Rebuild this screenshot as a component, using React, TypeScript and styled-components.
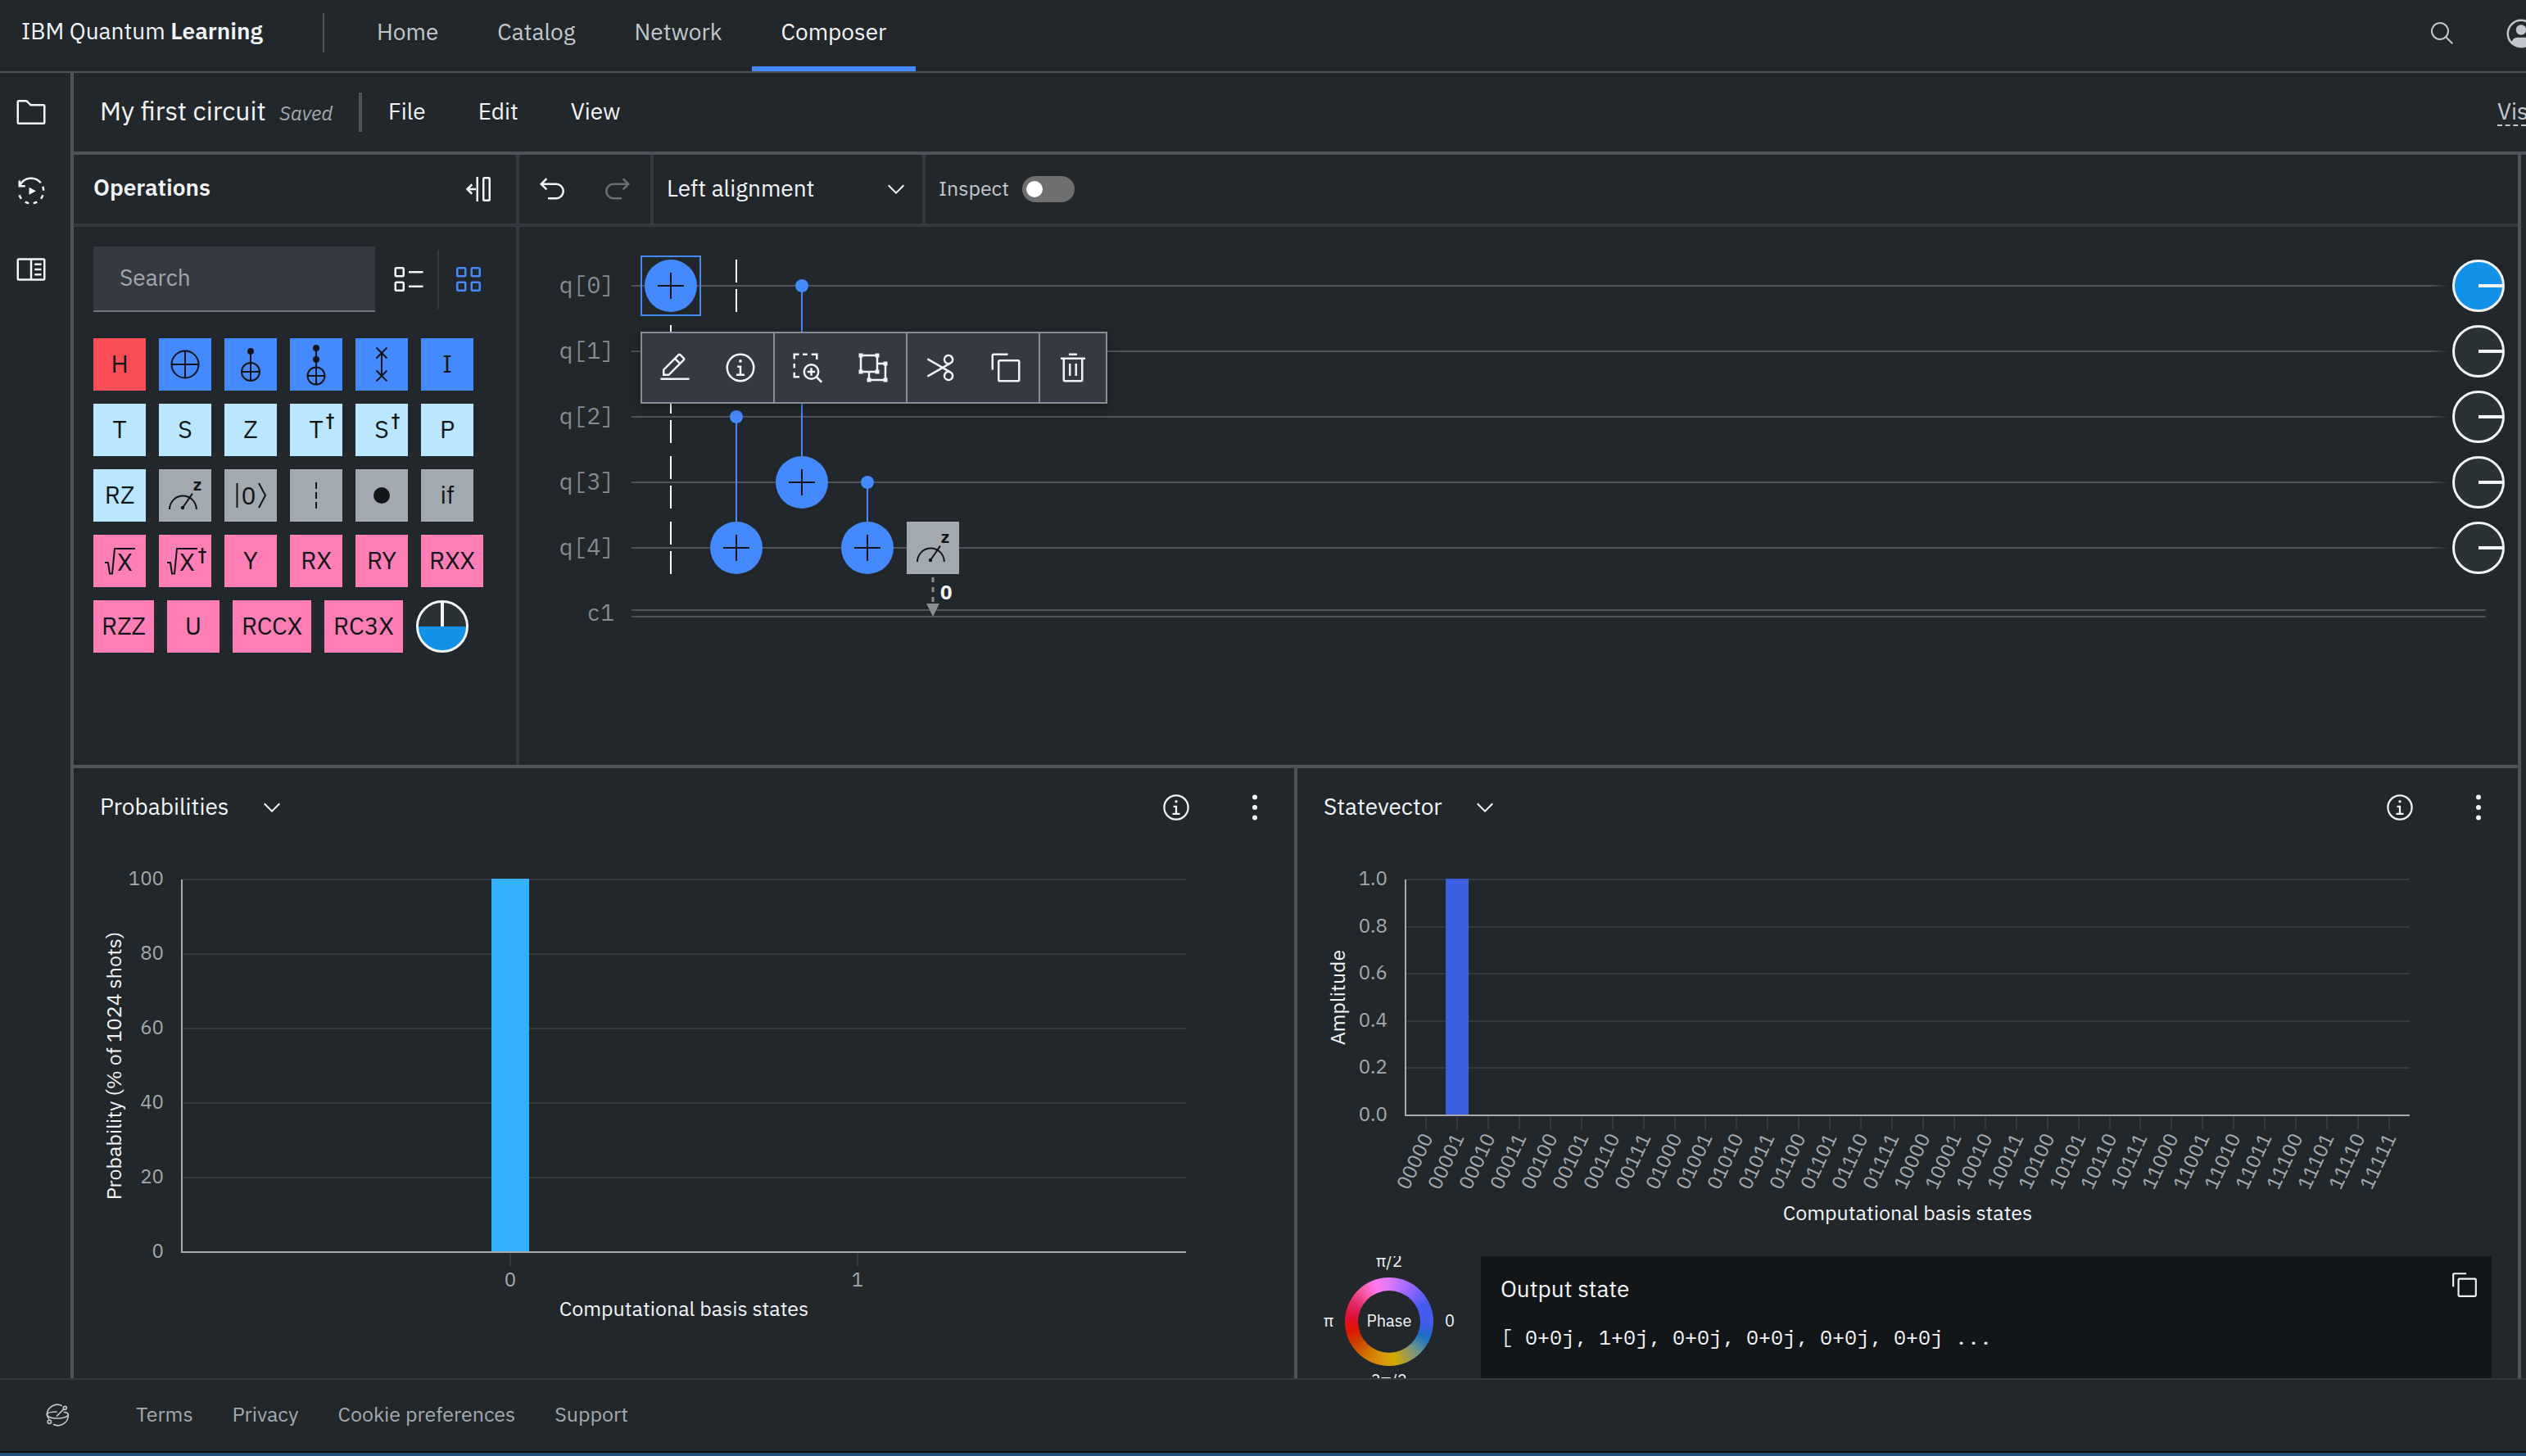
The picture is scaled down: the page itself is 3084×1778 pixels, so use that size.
import React, { useLayoutEffect, useRef, useState } from 'react';
import styled, { createGlobalStyle, css } from 'styled-components';

const c = {
  bg: '#21272a',
  line: '#4d5358',
  lineSoft: '#343a3f',
  field: '#353941',
  text: '#f2f4f8',
  text2: '#c1c7cd',
  text3: '#a2a9b0',
  muted: '#868c94',
  ink: '#121619',
  blue: '#4589ff',
  azure: '#1192e8',
};

const sans = `'IBM Plex Sans', Roboto, 'Liberation Sans', sans-serif`;
const mono = `'IBM Plex Mono', 'Liberation Mono', monospace`;

const GlobalStyle = createGlobalStyle`
  *, *::before, *::after { box-sizing: border-box; }
  body {
    margin: 0;
    background: ${c.bg};
    color: ${c.text};
    font-family: ${sans};
    font-size: 28px;
    overflow: hidden;
  }
  button, input, select { font: inherit; color: inherit; }
  svg { display: block; flex: none; }
`;

/* ---------- Icons ---------- */

type IconProps = { size?: number; children: React.ReactNode };
const Icon = ({ size = 40, children }: IconProps) => (
  <svg width={size} height={size} viewBox="0 0 32 32" fill="currentColor" aria-hidden="true">
    {children}
  </svg>
);
const line = { fill: 'none', stroke: 'currentColor', strokeWidth: 2 } as const;

const FolderIcon = () => (
  <Icon>
    <path d="M11.17,6l3.42,3.41.58.59H28V26H4V6h7.17m0-2H4A2,2,0,0,0,2,6V26a2,2,0,0,0,2,2H28a2,2,0,0,0,2-2V10a2,2,0,0,0-2-2H16L12.59,4.59A2,2,0,0,0,11.17,4Z" />
  </Icon>
);
const JobsIcon = () => (
  <Icon>
    <g {...line}>
      <path d="M5 10.8A12.2 12.2 0 0 1 25.5 8.2" />
      <path d="M4.6 6v5.4h5.6" />
      <path d="M27.4 11.8a12.2 12.2 0 0 1 .7 4M27.5 20.2a12 12 0 0 1-1.9 3.6M21.8 26.9a12.2 12.2 0 0 1-3.6 1.2M13.8 28.1a12 12 0 0 1-3.6-1.2M6.4 23.8a12 12 0 0 1-1.9-3.6" />
    </g>
    <path d="M14 12.6v7.2l6.8-3.6z" />
  </Icon>
);
const ReferenceIcon = () => (
  <Icon>
    <g {...line}>
      <rect x="3" y="6" width="26" height="20" rx="1" />
      <path d="M16 6v20M19.4 11H26M19.4 16H26M19.4 21H26" />
    </g>
  </Icon>
);
const SearchIcon = () => (
  <Icon size={32}>
    <path d="M29,27.586l-7.552-7.552a11.018,11.018,0,1,0-1.414,1.414L27.586,29ZM4,13a9,9,0,1,1,9,9A9.01,9.01,0,0,1,4,13Z" />
  </Icon>
);
const UserIcon = () => (
  <Icon>
    <circle cx="16" cy="16" r="13" {...line} />
    <circle cx="16" cy="12.4" r="5" />
    <path d="M6.8 24.6a5.6 5.6 0 0 1 5.4-4.8h7.6a5.6 5.6 0 0 1 5.4 4.8A13 13 0 0 1 6.8 24.6Z" />
  </Icon>
);
const CollapseIcon = () => (
  <Icon>
    <g {...line}>
      <path d="M15 4v24M13.6 16H5M9.800 11.400L5.200 16l4.600 4.600" />
      <rect x="21" y="5" width="6" height="22" rx="1" />
    </g>
  </Icon>
);
const UndoIcon = () => (
  <Icon>
    <path d="M20,10H7.815l3.587-3.586L10,5,4,11,10,17l1.402-1.415L7.818,12H20a6,6,0,0,1,0,12H12v2h8a8,8,0,0,0,0-16Z" />
  </Icon>
);
const RedoIcon = () => (
  <Icon>
    <path d="M12,10H24.185L20.598,6.414,22,5,28,11,22,17l-1.402-1.415L24.182,12H12a6,6,0,0,0,0,12h8v2H12a8,8,0,0,1,0-16Z" />
  </Icon>
);
const ChevronIcon = () => (
  <Icon size={32}>
    <path d="M16 22L6 12 7.4 10.6 16 19.2 24.6 10.6 26 12z" />
  </Icon>
);
const ListIcon = () => (
  <Icon>
    <g {...line}>
      <rect x="3" y="5" width="8" height="8" rx="1" />
      <rect x="3" y="19" width="8" height="8" rx="1" />
      <path d="M16 9h14M16 23h14" />
    </g>
  </Icon>
);
const GridIcon = () => (
  <Icon>
    <g {...line}>
      <rect x="5" y="5" width="8" height="8" rx="1" />
      <rect x="19" y="5" width="8" height="8" rx="1" />
      <rect x="5" y="19" width="8" height="8" rx="1" />
      <rect x="19" y="19" width="8" height="8" rx="1" />
    </g>
  </Icon>
);
const EditIcon = () => (
  <Icon>
    <path d="M2 26H30V28H2zM25.4 9c.8-.8.8-2 0-2.8l-3.6-3.6c-.8-.8-2-.8-2.8 0l-15 15V24h6.4L25.4 9zM20.4 4L24 7.6l-3 3L17.4 7 20.4 4zM6 22v-3.6l10-10 3.6 3.6-10 10H6z" />
  </Icon>
);
const InfoIcon = ({ size }: { size?: number }) => (
  <Icon size={size}>
    <path d="M17 22V14H13V16H15V22H12V24H20V22ZM16 8a1.5 1.5 0 1 0 1.5 1.5A1.5 1.5 0 0 0 16 8Z" />
    <path d="M16,30A14,14,0,1,1,30,16,14,14,0,0,1,16,30ZM16,4A12,12,0,1,0,28,16,12,12,0,0,0,16,4Z" />
  </Icon>
);
const ZoomAreaIcon = () => (
  <Icon>
    <g {...line}>
      <path d="M3 7.6V3h4.6M11.2 3h4.6M19.8 3H25v5M3 12v4.4M3 20.6V25h5" />
      <circle cx="19.6" cy="20" r="7" />
      <path d="M24.6 25l5.2 5.2M19.6 16.2v7.6M15.8 20h7.6" />
    </g>
  </Icon>
);
const UngroupIcon = () => (
  <Icon>
    <path {...line} d="M4 4h16v16H4zM20 12h8v16H12v-8" />
    {[[4, 4], [20, 4], [4, 20], [20, 20], [28, 12], [12, 28], [28, 28]].map(([x, y]) => (
      <rect key={`${x}-${y}`} x={x - 2} y={y - 2} width="4" height="4" />
    ))}
  </Icon>
);
const CutIcon = () => (
  <Icon>
    <path d="M26.5,19.63,20.24,16l6.26-3.63a5,5,0,0,0-1.21-9.2A5.19,5.19,0,0,0,24,3a5,5,0,0,0-4.33,7.53,5,5,0,0,0,2.39,2.1l-3.82,2.21L4,6.6,3,8.34,16.24,16,3,23.68l1,1.74,14.24-8.26,3.82,2.21a5,5,0,0,0-2.39,2.1A5,5,0,0,0,24,29a5.19,5.19,0,0,0,1.29-.17,5,5,0,0,0,1.21-9.2ZM21.4,9.53a3,3,0,0,1,1.1-4.12,3,3,0,0,1,4.1,1.11,3,3,0,0,1-1.1,4.11h0A3,3,0,0,1,21.4,9.53Zm5.2,16a3,3,0,0,1-4.1,1.11,3,3,0,0,1-1.1-4.12,3,3,0,0,1,4.1-1.1h0A3,3,0,0,1,26.6,25.48Z" />
  </Icon>
);
const CopyIcon = ({ size }: { size?: number }) => (
  <Icon size={size}>
    <path d="M28,10V28H10V10H28m0-2H10a2,2,0,0,0-2,2V28a2,2,0,0,0,2,2H28a2,2,0,0,0,2-2V10a2,2,0,0,0-2-2Z" />
    <path d="M4,18H2V4A2,2,0,0,1,4,2H18V4H4Z" />
  </Icon>
);
const TrashIcon = () => (
  <Icon>
    <path d="M12 12H14V24H12zM18 12H20V24H18zM12 2H20V4H12z" />
    <path d="M4 6V8H6V28a2 2 0 0 0 2 2H24a2 2 0 0 0 2-2V8h2V6zM8 28V8H24V28z" />
  </Icon>
);
const KebabIcon = () => (
  <svg width="8" height="36" viewBox="0 0 8 36" fill="currentColor" aria-hidden="true">
    <circle cx="4" cy="5.5" r="3" />
    <circle cx="4" cy="18" r="3" />
    <circle cx="4" cy="30.5" r="3" />
  </svg>
);
const QiskitIcon = () => (
  <svg width="34" height="34" viewBox="0 0 102 102" fill="none" stroke="currentColor" strokeWidth="5" aria-hidden="true">
    <path d="M68 17A38 38 0 0 0 13 48C13 59 33 63 52 63S90 58 91 49C91 44 84 41 74 40" />
    <path d="M13 48C15 41 32 39 50 39" />
    <path d="M91 49A38 38 0 0 1 36 85" />
    <path d="M13 48c0 8 4 14 8 18M48 56l27-27" />
    <circle cx="79" cy="25" r="6" />
    <circle cx="22" cy="76" r="6.5" />
  </svg>
);

/* ---------- Gate glyphs ---------- */

const GlyphSvg = styled.svg.attrs({ width: 64, height: 64, viewBox: '0 0 64 64', fill: 'none', stroke: c.ink, strokeWidth: 2 })`
  text {
    fill: ${c.ink};
    stroke: none;
    font-size: 30px;
    text-anchor: middle;
  }
  text.mark {
    font-size: 20px;
    font-weight: 700;
  }
`;

const MeterGlyph = () => (
  <GlyphSvg>
    <path d="M13 49a16.4 16.4 0 0 1 32.8 0M29 47L41 29.6" />
    <circle cx="29" cy="47" r="2.2" fill={c.ink} stroke="none" />
    <text className="mark" x="47" y="26">z</text>
  </GlyphSvg>
);
const NotGlyph = () => (
  <GlyphSvg>
    <path d="M32 15.5v33M15.5 32h33" />
    <circle cx="32" cy="32" r="16.5" />
  </GlyphSvg>
);
const CnotGlyph = () => (
  <GlyphSvg>
    <path d="M32 16v36M21 41h22" />
    <circle cx="32" cy="41" r="11" />
    <circle cx="32" cy="16" r="4" fill={c.ink} stroke="none" />
  </GlyphSvg>
);
const ToffoliGlyph = () => (
  <GlyphSvg>
    <path d="M32 12v44M21.5 46h21" />
    <circle cx="32" cy="46" r="10.5" />
    <circle cx="32" cy="12" r="4" fill={c.ink} stroke="none" />
    <circle cx="32" cy="26" r="4" fill={c.ink} stroke="none" />
  </GlyphSvg>
);
const SwapGlyph = () => (
  <GlyphSvg>
    <path d="M32 18v28M25.5 11.5l13 13M38.5 11.5l-13 13M25.5 39.5l13 13M38.5 39.5l-13 13" />
  </GlyphSvg>
);
const ResetGlyph = () => (
  <GlyphSvg>
    <path d="M15.5 17v30M42 17l8 15-8 15" />
    <text x="29.5" y="43">0</text>
  </GlyphSvg>
);
const BarrierGlyph = () => (
  <GlyphSvg>
    <path d="M32 16v32" strokeDasharray="8 4" />
  </GlyphSvg>
);
const DotGlyph = () => (
  <GlyphSvg>
    <circle cx="32" cy="32" r="10" fill={c.ink} stroke="none" />
  </GlyphSvg>
);
const DaggerGlyph = ({ letter }: { letter: string }) => (
  <GlyphSvg>
    <text x="32" y="42">{letter}</text>
    <text className="mark" x="49" y="27">†</text>
  </GlyphSvg>
);
const RootGlyph = ({ dagger = false }: { dagger?: boolean }) => (
  <GlyphSvg>
    <g transform={dagger ? 'translate(-4 0)' : undefined}>
      <path d="M14 34h4l2 13.5h3l3-30.5h25" />
      <text x="38.5" y="44">X</text>
    </g>
    {dagger && <text className="mark" x="53" y="31">†</text>}
  </GlyphSvg>
);

const PhaseDisk = ({ fill, vertical = false }: { fill: 'full' | 'half' | 'none'; vertical?: boolean }) => (
  <svg width="64" height="64" viewBox="0 0 64 64" aria-hidden="true">
    <circle cx="32" cy="32" r="30.5" fill={fill === 'full' ? c.azure : '#2b3235'} />
    {fill === 'half' && <path d="M1.5 32a30.5 30.5 0 0 0 61 0z" fill={c.azure} />}
    <circle cx="32" cy="32" r="30.5" fill="none" stroke={c.text} strokeWidth="3" />
    <path d={vertical ? 'M32 32V2' : 'M32 32H62'} stroke={c.text} strokeWidth="4" />
  </svg>
);

/* ---------- Shell ---------- */

const Page = styled.div`
  display: flex;
  flex-direction: column;
  height: 100vh;
`;
const Header = styled.header`
  display: flex;
  align-items: stretch;
  height: 89px;
  border-bottom: 2px solid ${c.line};
`;
const Brand = styled.a`
  display: flex;
  align-items: center;
  width: 394px;
  padding: 0 0 12px 26px;
  color: ${c.text};
  text-decoration: none;
  strong { font-weight: 600; }
`;
const HeaderRule = styled.span`
  width: 2px;
  height: 48px;
  margin: 16px 28px 0 0;
  background: ${c.line};
`;
const Nav = styled.nav`
  display: flex;
  flex: 1;
`;
const NavLink = styled.a<{ $active?: boolean }>`
  display: flex;
  align-items: center;
  padding: 0 36px 4px;
  border-bottom: 6px solid ${p => (p.$active ? c.blue : 'transparent')};
  color: ${p => (p.$active ? c.text : c.text2)};
  text-decoration: none;
`;
const PlainButton = styled.button<{ $dim?: boolean; $w?: number }>`
  display: flex;
  align-items: center;
  justify-content: center;
  flex: none;
  width: ${p => p.$w ?? 80}px;
  padding: 0;
  border: 0;
  background: none;
  color: ${p => (p.$dim ? '#6c7074' : 'inherit')};
`;
const HeaderActions = styled.div`
  display: flex;
  height: 82px;
  gap: 60px;
  color: ${c.text2};
  overflow: hidden;
`;
const AvatarButton = styled(PlainButton)`
  justify-content: flex-start;
  width: 26px;
`;

const Main = styled.div`
  display: flex;
  flex: 1;
  min-height: 0;
`;
const Rail = styled.nav`
  display: flex;
  flex-direction: column;
  width: 90px;
  border-right: 4px solid ${c.line};
  button {
    width: 76px;
    height: 96px;
  }
`;
const Workspace = styled.main`
  display: flex;
  flex-direction: column;
  flex: 1;
  min-width: 0;
`;

const TitleBar = styled.div`
  display: flex;
  align-items: center;
  height: 100px;
  padding-left: 32px;
  border-bottom: 4px solid ${c.line};
`;
const FileTitle = styled.h1`
  margin: 0;
  width: 219px;
  padding-bottom: 4px;
  font-size: 32px;
  font-weight: 400;
  white-space: nowrap;
`;
const Saved = styled.em`
  width: 97px;
  padding-top: 2px;
  color: ${c.text3};
  font-size: 24px;
`;
const TitleRule = styled.span`
  width: 4px;
  height: 48px;
  background: ${c.line};
`;
const MenuButton = styled.button`
  padding: 0 32px 4px;
  border: 0;
  background: none;
`;
const Seed = styled.span`
  flex: 0 0 35px;
  margin-left: auto;
  overflow: hidden;
  border-bottom: 2px dashed ${c.text2};
  color: ${c.text2};
  line-height: 32px;
`;

const Body = styled.div`
  display: flex;
  flex-direction: column;
  flex: 1;
  min-height: 0;
  margin-right: 6px;
  border-right: 4px solid ${c.line};
`;
const Composer = styled.section`
  display: flex;
  border-bottom: 4px solid ${c.line};
`;

/* ---------- Operations ---------- */

const Operations = styled.aside`
  width: 544px;
  flex: none;
  border-right: 4px solid ${c.lineSoft};
`;
const BarBase = css`
  display: flex;
  height: 88px;
  border-bottom: 4px solid ${c.lineSoft};
`;
const OpsHeader = styled.div`
  ${BarBase}
  justify-content: space-between;
  padding: 0 6px 0 24px;
  h2 {
    margin: 0;
    font-size: 28px;
    font-weight: 600;
    line-height: 80px;
  }
`;
const OpsTools = styled.div`
  display: flex;
  align-items: center;
  gap: 6px;
  padding: 24px;
`;
const SearchField = styled.input`
  width: 344px;
  height: 80px;
  padding: 0 32px 4px;
  border: 0;
  border-bottom: 2px solid #6f757c;
  border-radius: 0;
  background: ${c.field};
  outline: 0;
  &::placeholder { color: #a2a6b0; opacity: 1; }
`;
const ViewSwitch = styled.div`
  display: flex;
  height: 72px;
`;
const ViewButton = styled(PlainButton)<{ $on?: boolean }>`
  width: 70px;
  color: ${p => (p.$on ? c.blue : c.text)};
  & + & {
    width: 74px;
    border-left: 2px solid ${c.lineSoft};
  }
`;
const GateGrid = styled.div`
  display: flex;
  flex-wrap: wrap;
  gap: 16px;
  padding: 8px 20px 0 24px;
`;
const Gate = styled.button<{ $tone: string; $w?: number }>`
  display: flex;
  align-items: center;
  justify-content: center;
  width: ${p => p.$w ?? 64}px;
  height: 64px;
  padding: 0 0 4px;
  border: 0;
  background: ${p => p.$tone};
  color: ${c.ink};
  font-size: 30px;
  svg { margin-bottom: -4px; }
`;

const tone = { red: '#fa4d56', blue: c.blue, sky: '#bae6ff', grey: '#a2a9b0', pink: '#ff7eb6', none: 'transparent' };
const gates: { name: string; tone: string; w?: number; glyph?: React.ReactNode }[] = [
  { name: 'H', tone: tone.red },
  { name: 'NOT', tone: tone.blue, glyph: <NotGlyph /> },
  { name: 'CNOT', tone: tone.blue, glyph: <CnotGlyph /> },
  { name: 'Toffoli', tone: tone.blue, glyph: <ToffoliGlyph /> },
  { name: 'SWAP', tone: tone.blue, glyph: <SwapGlyph /> },
  { name: 'I', tone: tone.blue },
  { name: 'T', tone: tone.sky },
  { name: 'S', tone: tone.sky },
  { name: 'Z', tone: tone.sky },
  { name: 'T dagger', tone: tone.sky, glyph: <DaggerGlyph letter="T" /> },
  { name: 'S dagger', tone: tone.sky, glyph: <DaggerGlyph letter="S" /> },
  { name: 'P', tone: tone.sky },
  { name: 'RZ', tone: tone.sky },
  { name: 'Measure', tone: tone.grey, glyph: <MeterGlyph /> },
  { name: 'Reset', tone: tone.grey, glyph: <ResetGlyph /> },
  { name: 'Barrier', tone: tone.grey, glyph: <BarrierGlyph /> },
  { name: 'Control', tone: tone.grey, glyph: <DotGlyph /> },
  { name: 'if', tone: tone.grey },
  { name: 'Root X', tone: tone.pink, glyph: <RootGlyph /> },
  { name: 'Root X dagger', tone: tone.pink, glyph: <RootGlyph dagger /> },
  { name: 'Y', tone: tone.pink },
  { name: 'RX', tone: tone.pink },
  { name: 'RY', tone: tone.pink },
  { name: 'RXX', tone: tone.pink, w: 76 },
  { name: 'RZZ', tone: tone.pink, w: 74 },
  { name: 'U', tone: tone.pink },
  { name: 'RCCX', tone: tone.pink, w: 96 },
  { name: 'RC3X', tone: tone.pink, w: 96 },
  { name: 'Phase disk', tone: tone.none, glyph: <PhaseDisk fill="half" vertical /> },
];

/* ---------- Circuit ---------- */

const Editor = styled.div`
  flex: 1;
  min-width: 0;
`;
const EditorBar = styled.div`
  ${BarBase}
`;
const BarGroup = styled.div<{ $w?: number }>`
  display: flex;
  align-items: stretch;
  width: ${p => (p.$w ? `${p.$w}px` : 'auto')};
  border-right: ${p => (p.$w ? `4px solid ${c.lineSoft}` : '0')};
`;
const SelectBox = styled.div<{ $grow?: boolean }>`
  display: grid;
  align-items: center;
  flex: ${p => (p.$grow ? 1 : 'none')};
  > * { grid-area: 1 / 1; }
  > svg {
    justify-self: end;
    margin-right: ${p => (p.$grow ? 16 : 0)}px;
    pointer-events: none;
  }
`;
const Select = styled.select<{ $grow?: boolean }>`
  width: ${p => (p.$grow ? '100%' : 'auto')};
  height: 80px;
  padding: 0 ${p => (p.$grow ? 48 : 68)}px 4px ${p => (p.$grow ? 16 : 0)}px;
  border: 0;
  background: none;
  appearance: none;
  outline: 0;
  option { color: ${c.ink}; }
`;
const Inspect = styled.label`
  display: flex;
  align-items: center;
  gap: 16px;
  padding: 0 16px;
  color: ${c.text2};
  font-size: 25px;
  span { padding-bottom: 4px; }
`;
const Toggle = styled.input`
  display: flex;
  align-items: center;
  width: 64px;
  height: 32px;
  margin: 0;
  padding: 0 5px;
  border-radius: 16px;
  background: #6f6f6f;
  appearance: none;
  &::before {
    content: '';
    width: 20px;
    height: 20px;
    border-radius: 50%;
    background: #fff;
  }
  &:checked { justify-content: flex-end; background: ${c.blue}; }
`;

const Canvas = styled.div`
  position: relative;
  min-height: 657px;
  padding: 32px 16px 0 0;
`;
const WireRow = styled.div`
  display: flex;
  align-items: center;
  gap: 20px;
  height: 80px;
`;
const WireLabel = styled.span`
  width: 116px;
  margin-right: 1px;
  padding-bottom: 4px;
  color: ${c.muted};
  font: 28px ${mono};
  text-align: right;
`;
const Wire = styled.span`
  flex: 1;
  height: 2px;
  margin-right: -16px;
  background: linear-gradient(to right, ${c.line} calc(100% - 24px), transparent);
`;
const ClassicalWire = styled.span`
  flex: 1;
  height: 10px;
  margin-right: 23px;
  border: solid ${c.line};
  border-width: 2px 0;
`;
const GateLayer = styled.svg`
  position: absolute;
  top: 0;
  left: 132px;
`;
const ContextBar = styled.div`
  position: absolute;
  top: 128px;
  left: 148px;
  display: flex;
  height: 88px;
  border: 2px solid #878d96;
  background: ${c.field};
  box-shadow: 0 4px 12px rgba(0, 0, 0, 0.3);
`;
const ContextGroup = styled.div`
  display: flex;
  & + & { border-left: 2px solid #878d96; }
`;

const col = (i: number) => 53 + i * 80;
const row = (i: number) => 72 + i * 80;

const Target = ({ x, y }: { x: number; y: number }) => (
  <g>
    <circle cx={col(x)} cy={row(y)} r="32" fill={c.blue} />
    <path d={`M${col(x) - 16} ${row(y)}h32M${col(x)} ${row(y) - 16}v32`} stroke={c.ink} strokeWidth="2" />
  </g>
);
const Controlled = ({ x, from, to }: { x: number; from: number; to: number }) => (
  <g>
    <path d={`M${col(x)} ${row(from)}V${row(to)}`} stroke={c.blue} strokeWidth="2" />
    <circle cx={col(x)} cy={row(from)} r="8" fill={c.blue} />
    <Target x={x} y={to} />
  </g>
);
const Barrier = ({ x, y }: { x: number; y: number }) => (
  <path d={`M${col(x)} ${row(y) - 32}v28m0 8v28`} stroke="#fff" strokeWidth="2" />
);

const Gates = () => (
  <GateLayer width="460" height="500" viewBox="0 0 460 500" fill="none">
    <Barrier x={1} y={0} />
    {[1, 2, 3, 4].map(y => <Barrier key={y} x={0} y={y} />)}
    <Target x={0} y={0} />
    <rect x={col(0) - 36} y={row(0) - 36} width="72" height="72" stroke={c.blue} strokeWidth="2" />
    <Controlled x={1} from={2} to={4} />
    <Controlled x={2} from={0} to={3} />
    <Controlled x={3} from={3} to={4} />
    <rect x={col(4) - 32} y={row(4) - 32} width="64" height="64" fill={tone.grey} />
    <svg x={col(4) - 32} y={row(4) - 32} width="64" height="64"><MeterGlyph /></svg>
    <path d={`M${col(4)} 428v32`} stroke="#8d8d8d" strokeWidth="3" strokeDasharray="6 6" />
    <path d={`M${col(4) - 8} 460h16l-8 16z`} fill="#8d8d8d" />
    <text x={col(4) + 9} y="455" fill={c.text} fontSize="24" fontWeight="700">0</text>
  </GateLayer>
);

/* ---------- Charts ---------- */

const Panels = styled.section`
  display: grid;
  grid-template-columns: minmax(0, 1fr) minmax(0, 1fr);
  gap: 4px;
  flex: 1;
  min-height: 0;
  overflow: hidden;
  background: ${c.line};
`;
const Panel = styled.article`
  display: flex;
  flex-direction: column;
  min-height: 0;
  overflow: hidden;
  background: ${c.bg};
`;
const PanelHeader = styled.div`
  display: flex;
  align-items: center;
  flex: none;
  height: 96px;
  padding: 0 0 0 32px;
  button { height: 96px; width: 96px; }
`;
const Spacer = styled.span`
  flex: 1;
`;
const ChartSvg = styled.svg`
  width: 100%;
  text { font-size: 24px; fill: ${c.text3}; }
  text.title { font-size: 25px; fill: ${c.text}; text-anchor: middle; }
`;

type ChartProps = {
  height: number;
  plot: number;
  yTicks: string[];
  yTitle: string;
  states: string[];
  inset: number;
  value: number;
  barWidth: number;
  color: string;
  tilted?: boolean;
};

const Chart = ({ height, plot, yTicks, yTitle, states, inset, value, barWidth, color, tilted }: ChartProps) => {
  const ref = useRef<SVGSVGElement>(null);
  const [width, setWidth] = useState(1490);
  useLayoutEffect(() => {
    const node = ref.current;
    if (!node) return;
    const measure = () => setWidth(node.getBoundingClientRect().width);
    measure();
    const observer = new ResizeObserver(measure);
    observer.observe(node);
    return () => observer.disconnect();
  }, []);

  const left = 132;
  const right = width - 132;
  const top = 40;
  const bottom = top + plot;
  const span = right - left;
  const first = left + span * inset;
  const pitch = (span * (1 - 2 * inset)) / (states.length - 1);
  const xAt = (i: number) => Math.round(first + pitch * i);
  const mid = (left + right) / 2;

  return (
    <ChartSvg ref={ref} height={height} role="img" aria-label={yTitle}>
      {yTicks.map((t, i) => {
        const y = Math.round(top + (plot * i) / (yTicks.length - 1));
        return (
          <g key={t}>
            <path d={`M${left} ${y}H${right}`} stroke={c.lineSoft} strokeWidth="2" />
            <text x="110" y={y + 7} textAnchor="end">{t}</text>
          </g>
        );
      })}
      {states.map((s, i) => (
        <g key={s}>
          <path d={`M${xAt(i)} ${bottom}v17`} stroke={c.lineSoft} strokeWidth="2" />
          {tilted ? (
            <text transform={`translate(${xAt(i) + 9} ${bottom + 27}) rotate(-65)`} textAnchor="end">{s}</text>
          ) : (
            <text x={xAt(i)} y={bottom + 42} textAnchor="middle">{s}</text>
          )}
        </g>
      ))}
      <rect x={xAt(value) - barWidth / 2} y={top - 1} width={barWidth} height={plot} fill={color} />
      <path d={`M${left} ${top}V${bottom}H${right}`} fill="none" stroke="#a8abae" strokeWidth="2" />
      <text className="title" x={mid} y={bottom + (tilted ? 128 : 78)}>Computational basis states</text>
      <text className="title" transform={`translate(58 ${top + plot / 2}) rotate(-90)`}>{yTitle}</text>
    </ChartSvg>
  );
};

const basis = Array.from({ length: 32 }, (_, i) => i.toString(2).padStart(5, '0'));

const OutputRow = styled.div`
  display: flex;
  flex: 1;
  gap: 32px;
  min-height: 0;
  padding: 0 32px;
  overflow: hidden;
`;
const PhaseLegend = styled.div`
  display: grid;
  grid-template: 38px 108px 38px / 26px 108px 26px;
  align-items: center;
  justify-items: center;
  align-self: flex-start;
  margin-top: -12px;
  font-size: 20px;
  span { padding-bottom: 3px; }
  span:first-child, span:last-child { grid-column: 1 / -1; }
  span:nth-child(2) { justify-self: start; }
  span:nth-child(4) { justify-self: end; }
`;
const PhaseRing = styled.div`
  display: grid;
  width: 108px;
  height: 108px;
  padding: 16px;
  border-radius: 50%;
  background: conic-gradient(
    from 90deg,
    #465bf0 0deg, #1a6fc4 24deg, #6b9488 46deg, #a09a50 62deg, #d4aa00 82deg,
    #d8960c 100deg, #d27800 122deg, #cc3a00 150deg, #e01400 168deg, #de1030 186deg,
    #e02a68 208deg, #f85ca8 230deg, #ff7af0 250deg, #d878f8 272deg, #8f64ff 306deg,
    #465bf0 334deg, #465bf0 360deg
  );
`;
const PhaseCore = styled.div`
  display: grid;
  place-items: center;
  padding-bottom: 4px;
  border-radius: 50%;
  background: ${c.bg};
`;
const OutputBox = styled.div`
  flex: 1;
  min-width: 0;
  padding: 16px 16px 0 24px;
  background: ${c.ink};
`;
const OutputHead = styled.div`
  display: flex;
  align-items: flex-start;
  justify-content: space-between;
  h3 {
    margin: 0;
    font-size: 28px;
    font-weight: 400;
    line-height: 48px;
  }
  button { width: 34px; height: 38px; }
`;
const OutputCode = styled.code`
  display: block;
  font: 25px ${mono};
  line-height: 69px;
`;

/* ---------- Footer ---------- */

const Footer = styled.footer`
  display: flex;
  align-items: center;
  height: 95px;
  padding: 0 53px 4px;
  border-top: 2px solid ${c.lineSoft};
  border-bottom: 4px solid #22527b;
  box-shadow: inset 0 -2px 0 #101214;
  color: ${c.text2};
  a {
    color: ${c.text3};
    font-size: 25px;
    text-decoration: none;
  }
`;
const FooterLinks = styled.nav`
  display: flex;
  gap: 48px;
  margin-left: 79px;
  padding-bottom: 3px;
`;

/* ---------- App ---------- */

const PanelTitle = ({ name }: { name: string }) => (
  <PanelHeader>
    <SelectBox>
      <Select aria-label="Visualization" defaultValue={name}>
        <option>{name}</option>
      </Select>
      <ChevronIcon />
    </SelectBox>
    <Spacer />
    <PlainButton aria-label="Information"><InfoIcon size={36} /></PlainButton>
    <PlainButton aria-label="More options"><KebabIcon /></PlainButton>
  </PanelHeader>
);

export default function App() {
  return (
    <Page>
      <GlobalStyle />
      <Header>
        <Brand href="#"><span>IBM Quantum <strong>Learning</strong></span></Brand>
        <HeaderRule />
        <Nav aria-label="Main">
          <NavLink href="#">Home</NavLink>
          <NavLink href="#">Catalog</NavLink>
          <NavLink href="#">Network</NavLink>
          <NavLink href="#" $active>Composer</NavLink>
        </Nav>
        <HeaderActions>
          <PlainButton $w={32} aria-label="Search"><SearchIcon /></PlainButton>
          <AvatarButton aria-label="Account"><UserIcon /></AvatarButton>
        </HeaderActions>
      </Header>

      <Main>
        <Rail aria-label="Workspace">
          <PlainButton aria-label="Files"><FolderIcon /></PlainButton>
          <PlainButton aria-label="Jobs"><JobsIcon /></PlainButton>
          <PlainButton aria-label="Reference"><ReferenceIcon /></PlainButton>
        </Rail>

        <Workspace>
          <TitleBar>
            <FileTitle>My first circuit</FileTitle>
            <Saved>Saved</Saved>
            <TitleRule />
            <MenuButton>File</MenuButton>
            <MenuButton>Edit</MenuButton>
            <MenuButton>View</MenuButton>
            <Seed>Vis</Seed>
          </TitleBar>

          <Body>
            <Composer>
              <Operations>
                <OpsHeader>
                  <h2>Operations</h2>
                  <PlainButton aria-label="Collapse panel"><CollapseIcon /></PlainButton>
                </OpsHeader>
                <OpsTools>
                  <SearchField type="search" placeholder="Search" aria-label="Search operations" />
                  <ViewSwitch>
                    <ViewButton aria-label="List view"><ListIcon /></ViewButton>
                    <ViewButton $on aria-label="Grid view"><GridIcon /></ViewButton>
                  </ViewSwitch>
                </OpsTools>
                <GateGrid>
                  {gates.map(g => (
                    <Gate key={g.name} $tone={g.tone} $w={g.w} aria-label={g.name}>{g.glyph ?? g.name}</Gate>
                  ))}
                </GateGrid>
              </Operations>

              <Editor>
                <EditorBar>
                  <BarGroup $w={164}>
                    <PlainButton aria-label="Undo"><UndoIcon /></PlainButton>
                    <PlainButton $dim aria-label="Redo"><RedoIcon /></PlainButton>
                  </BarGroup>
                  <BarGroup $w={332}>
                    <SelectBox $grow>
                      <Select $grow aria-label="Alignment" defaultValue="Left alignment">
                        <option>Left alignment</option>
                      </Select>
                      <ChevronIcon />
                    </SelectBox>
                  </BarGroup>
                  <BarGroup>
                    <Inspect>
                      <span>Inspect</span>
                      <Toggle type="checkbox" role="switch" />
                    </Inspect>
                  </BarGroup>
                </EditorBar>

                <Canvas>
                  {[0, 1, 2, 3, 4].map(q => (
                    <WireRow key={q}>
                      <WireLabel>{`q[${q}]`}</WireLabel>
                      <Wire />
                      <PhaseDisk fill={q === 0 ? 'full' : 'none'} />
                    </WireRow>
                  ))}
                  <WireRow>
                    <WireLabel>c1</WireLabel>
                    <ClassicalWire />
                  </WireRow>
                  <Gates />
                  <ContextBar role="toolbar" aria-label="Gate actions">
                    <ContextGroup>
                      <PlainButton aria-label="Edit gate"><EditIcon /></PlainButton>
                      <PlainButton aria-label="Gate information"><InfoIcon /></PlainButton>
                    </ContextGroup>
                    <ContextGroup>
                      <PlainButton aria-label="Expand"><ZoomAreaIcon /></PlainButton>
                      <PlainButton aria-label="Ungroup"><UngroupIcon /></PlainButton>
                    </ContextGroup>
                    <ContextGroup>
                      <PlainButton aria-label="Cut"><CutIcon /></PlainButton>
                      <PlainButton aria-label="Copy"><CopyIcon /></PlainButton>
                    </ContextGroup>
                    <ContextGroup>
                      <PlainButton aria-label="Delete"><TrashIcon /></PlainButton>
                    </ContextGroup>
                  </ContextBar>
                </Canvas>
              </Editor>
            </Composer>

            <Panels>
              <Panel>
                <PanelTitle name="Probabilities" />
                <Chart
                  height={600}
                  plot={455}
                  yTicks={['100', '80', '60', '40', '20', '0']}
                  yTitle="Probability (% of 1024 shots)"
                  states={['0', '1']}
                  inset={0.327}
                  value={0}
                  barWidth={46}
                  color="#33b1ff"
                />
              </Panel>
              <Panel>
                <PanelTitle name="Statevector" />
                <Chart
                  height={500}
                  plot={288}
                  yTicks={['1.0', '0.8', '0.6', '0.4', '0.2', '0.0']}
                  yTitle="Amplitude"
                  states={basis}
                  inset={0.0205}
                  value={1}
                  barWidth={28}
                  color="#3b5fe0"
                  tilted
                />
                <OutputRow>
                  <PhaseLegend>
                    <span>π/2</span>
                    <span>π</span>
                    <PhaseRing><PhaseCore>Phase</PhaseCore></PhaseRing>
                    <span>0</span>
                    <span>3π/2</span>
                  </PhaseLegend>
                  <OutputBox>
                    <OutputHead>
                      <h3>Output state</h3>
                      <PlainButton aria-label="Copy output state"><CopyIcon size={34} /></PlainButton>
                    </OutputHead>
                    <OutputCode>[ 0+0j, 1+0j, 0+0j, 0+0j, 0+0j, 0+0j ...</OutputCode>
                  </OutputBox>
                </OutputRow>
              </Panel>
            </Panels>
          </Body>
        </Workspace>
      </Main>

      <Footer>
        <QiskitIcon />
        <FooterLinks aria-label="Footer">
          <a href="#">Terms</a>
          <a href="#">Privacy</a>
          <a href="#">Cookie preferences</a>
          <a href="#">Support</a>
        </FooterLinks>
      </Footer>
    </Page>
  );
}
